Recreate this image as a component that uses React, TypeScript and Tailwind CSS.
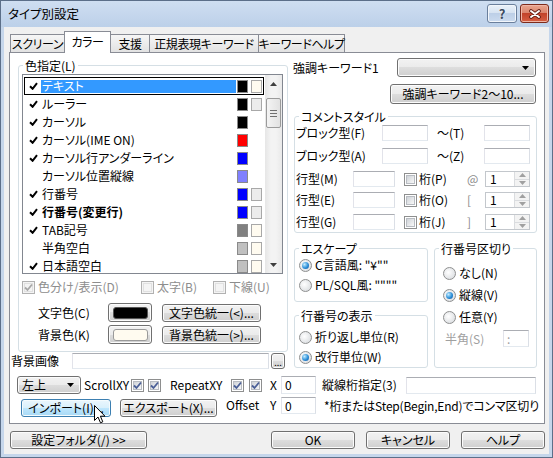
import type { ReactNode } from "react";

const btn =
  "flex items-center justify-center whitespace-nowrap rounded-[3px] border border-[#707070] bg-[linear-gradient(#f2f2f2_0%,#ebebeb_50%,#dddddd_50%,#cfcfcf_100%)] shadow-[inset_0_0_0_1px_#fcfcfc]";
const btnHot =
  "flex items-center justify-center whitespace-nowrap rounded-[3px] border border-[#3c7fb1] bg-[linear-gradient(#eaf6fd_0%,#d9f0fc_50%,#bee6fd_50%,#a7d9f5_100%)] shadow-[inset_0_0_0_1px_#f4fbfe]";
const field =
  "flex items-center border border-[#abadb3] border-l-[#e2e3ea] border-r-[#dbdfe6] border-b-[#e3e9ef] bg-white pl-[3px]";

const items = [
  { label: "テキスト", on: true, fg: "bg-[#000000]", bg: "bg-[#fffbf0]" },
  { label: "ルーラー", on: true, fg: "bg-[#000000]", bg: "bg-[#ececec]" },
  { label: "カーソル", on: true, fg: "bg-[#000000]", bg: "" },
  { label: "カーソル(IME ON)", on: true, fg: "bg-[#ff0000]", bg: "" },
  { label: "カーソル行アンダーライン", on: true, fg: "bg-[#0000ff]", bg: "" },
  { label: "カーソル位置縦線", on: false, fg: "bg-[#8080ff]", bg: "" },
  { label: "行番号", on: true, fg: "bg-[#0000ff]", bg: "bg-[#ececec]" },
  { label: "行番号(変更行)", on: true, fg: "bg-[#0000ff]", bg: "bg-[#ececec]", bold: true },
  { label: "TAB記号", on: true, fg: "bg-[#808080]", bg: "bg-[#fffbf0]" },
  { label: "半角空白", on: false, fg: "bg-[#c0c0c0]", bg: "bg-[#fffbf0]" },
  { label: "日本語空白", on: true, fg: "bg-[#c0c0c0]", bg: "bg-[#fffbf0]" },
];

const tabs = [
  { label: "スクリーン", cls: "w-[55px]" },
  { label: "カラー", cls: "w-[47px]", active: true },
  { label: "支援", cls: "w-[40px]" },
  { label: "正規表現キーワード", cls: "w-[110px]" },
  { label: "キーワードヘルプ", cls: "w-[87px]" },
];

function Tick() {
  return (
    <svg width="9" height="8" viewBox="0 0 9 8">
      <path d="M1 4.2L3.6 6.8L8 1.2" stroke="#000" strokeWidth="2" fill="none" />
    </svg>
  );
}

function Check({ checked = false, disabled = false }: { checked?: boolean; disabled?: boolean }) {
  return (
    <span
      className={`relative flex h-[13px] w-[13px] shrink-0 items-center justify-center border ${
        disabled ? "border-[#b1b1b1] bg-[#f4f4f4]" : "border-[#8e8f8f] bg-white"
      }`}
    >
      <span
        className={`h-[9px] w-[9px] border ${
          disabled
            ? "border-[#e0e0e0] bg-[#f4f4f4]"
            : "border-[#b8bcc2] bg-[linear-gradient(135deg,#cfd3d8,#f8f8f8)]"
        }`}
      />
      {checked && (
        <svg className="absolute inset-0" width="11" height="11" viewBox="0 0 11 11">
          <path
            d="M2 5.5L4.5 8L9 2.5"
            stroke={disabled ? "#a8a8a8" : "#4a5f97"}
            strokeWidth="1.8"
            fill="none"
          />
        </svg>
      )}
    </span>
  );
}

function Radio({ checked = false }: { checked?: boolean }) {
  return (
    <span className="flex h-[13px] w-[13px] shrink-0 items-center justify-center rounded-full border border-[#8e8f8f] bg-[radial-gradient(circle_at_40%_40%,#ffffff,#d3d6da)]">
      {checked && (
        <span className="h-[7px] w-[7px] rounded-full bg-[radial-gradient(circle_at_35%_35%,#c4ecff,#2c8fd8_55%,#0e4e9a)]" />
      )}
    </span>
  );
}

function Arrow({ up = false, color = "#000" }: { up?: boolean; color?: string }) {
  return (
    <svg width="7" height="4" viewBox="0 0 7 4">
      <path d={up ? "M0 4H7L3.5 0Z" : "M0 0H7L3.5 4Z"} fill={color} />
    </svg>
  );
}

function Combo({ className, text }: { className: string; text?: string }) {
  return (
    <div
      className={`flex items-center rounded-[3px] border border-[#707070] bg-[linear-gradient(#f2f2f2_0%,#ebebeb_50%,#dddddd_50%,#cfcfcf_100%)] pl-[4px] pr-[6px] shadow-[inset_0_0_0_1px_#fcfcfc] ${className}`}
    >
      <span className="flex-1">{text}</span>
      <Arrow />
    </div>
  );
}

function Spin() {
  return (
    <span className="flex h-[16px] w-[45px] border border-[#c3c7cc] bg-white">
      <span className="flex flex-1 items-center pl-[4px]">1</span>
      <span className="flex w-[15px] flex-col border-l border-[#dadcdf]">
        <span className="flex flex-1 items-center justify-center border-b border-[#dadcdf] bg-[#f3f3f3]">
          <Arrow up color="#a0a0a0" />
        </span>
        <span className="flex flex-1 items-center justify-center bg-[#f3f3f3]">
          <Arrow color="#a0a0a0" />
        </span>
      </span>
    </span>
  );
}

function Group({ label, className, children }: { label: string; className: string; children?: ReactNode }) {
  return (
    <fieldset className={`flex flex-col rounded-[3px] border border-[#d5dfe5] ${className}`}>
      <legend className="ml-[4px] whitespace-nowrap px-[2px] leading-[13px]">{label}</legend>
      {children}
    </fieldset>
  );
}

function RadioRow({ text, checked, className }: { text: string; checked?: boolean; className: string }) {
  return (
    <div className={`flex h-[14px] items-center ${className}`}>
      <Radio checked={checked} />
      <span className="ml-[3px] whitespace-nowrap">{text}</span>
    </div>
  );
}

function LineRow({ label, digit, sym }: { label: string; digit: string; sym: string }) {
  return (
    <div className="flex h-[16px] items-center">
      <span className="ml-[1px] w-[57px]">{label}</span>
      <span className={`${field} h-[16px] w-[42px]`} />
      <span className="ml-[9px]">
        <Check />
      </span>
      <span className="ml-[2px] w-[47px]">{digit}</span>
      <span className="w-[19px] pl-[1px] text-[#8a8a8a]">{sym}</span>
      <Spin />
    </div>
  );
}

function ColorList() {
  return (
    <div className="ml-[3px] mt-[2px] flex h-[200px] w-[261px] border border-[#828790] bg-white">
      <div className="flex w-[242px] flex-col overflow-hidden pt-[2px]">
        {items.map((it, i) => (
          <div
            key={i}
            className={`mx-[1px] flex h-[18px] shrink-0 items-center border ${
              i === 0 ? "border-black" : "border-transparent"
            }`}
          >
            <span className="flex w-[16px] justify-center">{it.on && <Tick />}</span>
            <span
              className={`flex h-[13px] w-[195px] items-center whitespace-nowrap pl-[1px] ${
                i === 0 ? "bg-[#3399ff] text-white" : ""
              } ${it.bold ? "font-bold" : ""}`}
            >
              {it.label}
            </span>
            <span className={`ml-[1px] h-[13px] w-[11px] border border-[#8a8a8a] ${it.fg}`} />
            {it.bg && <span className={`ml-[3px] h-[13px] w-[11px] border border-[#a8a8a8] ${it.bg}`} />}
          </div>
        ))}
      </div>
      <div className="flex w-[17px] flex-col bg-[linear-gradient(90deg,#e6e6e6,#f3f3f3_35%,#f3f3f3_65%,#e9e9e9)]">
        <span className="flex h-[17px] items-center justify-center">
          <Arrow up color="#404040" />
        </span>
        <span className="mx-[1px] mt-[6px] flex h-[30px] flex-col items-center justify-center gap-[2px] rounded-[2px] border border-[#9b9b9b] bg-[linear-gradient(90deg,#f4f4f4,#e2e2e2)]">
          <span className="h-px w-[7px] bg-[#707070]" />
          <span className="h-px w-[7px] bg-[#707070]" />
          <span className="h-px w-[7px] bg-[#707070]" />
        </span>
        <span className="flex-1" />
        <span className="flex h-[17px] items-center justify-center">
          <Arrow color="#404040" />
        </span>
      </div>
    </div>
  );
}

export default function App() {
  return (
    <div className="relative h-[458px] w-[553px] overflow-hidden border border-[#5c6f89] bg-[#c5d6eb] font-['Noto_Sans_CJK_JP','Noto_Sans',sans-serif] text-[12px] leading-[14px] text-black [font-feature-settings:'palt']">
      {/* title bar */}
      <div className="flex h-[26px] items-start bg-[linear-gradient(#cfdef1,#bcd0e9)] pl-[7px]">
        <span className="mt-[6px] text-[12.5px]">タイプ別設定</span>
        <div className="ml-auto mr-[3px] mt-[3px] flex gap-[3px]">
          <div className="flex h-[19px] w-[30px] items-center justify-center rounded-[3px] border border-[#6a7f9c] bg-[linear-gradient(#eaf1f9_0%,#d5e2f1_50%,#bdcfe7_50%,#cbdbef_100%)] shadow-[inset_0_0_0_1px_#f2f6fb]">
            <span className="text-[13px] font-bold leading-[14px] text-[#3c4b60] [text-shadow:0_0_2px_#fff]">?</span>
          </div>
          <div className="flex h-[19px] w-[29px] items-center justify-center rounded-[3px] border border-[#7d2a1b] bg-[linear-gradient(#e9a58f_0%,#d9826a_50%,#c2432a_50%,#d65f43_100%)] shadow-[inset_0_0_0_1px_#efb6a6]">
            <svg width="12" height="10" viewBox="0 0 12 10">
              <path d="M2 2L10 8M10 2L2 8" stroke="#5a1a10" strokeWidth="3.6" strokeLinecap="round" />
              <path d="M2 2L10 8M10 2L2 8" stroke="#fff" strokeWidth="2" strokeLinecap="round" />
            </svg>
          </div>
        </div>
      </div>

      {/* client */}
      <div className="mx-[3px] flex h-[427px] flex-col bg-[#f0f0f0]">
        <div className="mt-[4px] flex h-[21px] items-end pl-[6px]">
          {tabs.map((t, i) =>
            t.active ? (
              <div
                key={i}
                className={`relative z-10 -mb-px -ml-px flex h-[22px] items-center justify-center whitespace-nowrap border border-b-0 border-[#898c95] bg-white pb-[2px] tracking-[-0.4px] ${t.cls}`}
              >
                {t.label}
              </div>
            ) : (
              <div
                key={i}
                className={`flex h-[18px] items-center justify-center whitespace-nowrap border border-b-0 border-[#898c95] bg-[linear-gradient(#f6f6f6,#e2e2e2)] pt-[1px] tracking-[-0.4px] ${
                  i === 0 ? "" : "-ml-px"
                } ${t.cls}`}
              >
                {t.label}
              </div>
            )
          )}
        </div>

        <div className="ml-[5px] flex h-[372px] w-[536px] flex-col border border-[#898c95] bg-white">
          <div className="flex items-start">
            {/* left column */}
            <div className="ml-[1px] flex w-[277px] flex-col">
              <Group label="色指定(L)" className="ml-[7px] mt-[6px] h-[293px] w-[270px]">
                <ColorList />
                <div className="ml-[3px] mt-[6px] flex h-[14px] items-center text-[#8d8d8d]">
                  <span className="flex w-[119px] items-center">
                    <Check checked disabled />
                    <span className="ml-[3px]">色分け/表示(D)</span>
                  </span>
                  <span className="flex w-[72px] items-center">
                    <Check disabled />
                    <span className="ml-[3px]">太字(B)</span>
                  </span>
                  <span className="flex items-center">
                    <Check disabled />
                    <span className="ml-[3px]">下線(U)</span>
                  </span>
                </div>
                <div className="mt-[9px] flex h-[19px] items-center">
                  <span className="ml-[19px] w-[70px]">文字色(C)</span>
                  <span className={`${btn} h-[19px] w-[44px]`}>
                    <span className="h-[12px] w-[35px] rounded-[3px] border border-[#555] bg-black" />
                  </span>
                  <span className={`${btn} ml-[10px] h-[18px] w-[99px]`}>文字色統一(&lt;)...</span>
                </div>
                <div className="mt-[3px] flex h-[19px] items-center">
                  <span className="ml-[19px] w-[70px]">背景色(K)</span>
                  <span className={`${btn} h-[19px] w-[44px]`}>
                    <span className="h-[12px] w-[35px] rounded-[3px] border border-[#9a9a9a] bg-[#fffbf0]" />
                  </span>
                  <span className={`${btn} ml-[10px] h-[18px] w-[99px]`}>背景色統一(&gt;)...</span>
                </div>
              </Group>
              <div className="mt-[1px] flex h-[16px] items-center">
                <span className="w-[61px]">背景画像</span>
                <span className={`${field} h-[16px] w-[197px]`} />
                <span className={`${btn} ml-[2px] h-[16px] w-[14px] items-end pb-[1px] text-[9px] leading-[9px]`}>...</span>
              </div>
            </div>

            {/* right column */}
            <div className="ml-[5px] flex w-[244px] flex-col">
              <div className="mt-[5px] flex h-[19px] items-center">
                <span className="flex-1">強調キーワード1</span>
                <Combo className="mr-[1px] h-[19px] w-[139px]" />
              </div>
              <span className={`${btn} mr-[1px] mt-[7px] h-[20px] w-[146px] self-end`}>強調キーワード2～10...</span>

              <Group label="コメントスタイル" className="ml-[1px] mt-[6px] h-[123px] w-[243px]">
                <div className="mt-[2px] flex h-[16px] items-center">
                  <span className="ml-[1px] w-[86px]">ブロック型(F)</span>
                  <span className={`${field} h-[16px] w-[46px]`} />
                  <span className="ml-[9px] w-[47px]">～(T)</span>
                  <span className={`${field} h-[16px] w-[46px]`} />
                </div>
                <div className="mt-[7px] flex h-[16px] items-center">
                  <span className="ml-[1px] w-[86px]">ブロック型(A)</span>
                  <span className={`${field} h-[16px] w-[46px]`} />
                  <span className="ml-[9px] w-[47px]">～(Z)</span>
                  <span className={`${field} h-[16px] w-[46px]`} />
                </div>
                <div className="mt-[7px]">
                  <LineRow label="行型(M)" digit="桁(P)" sym="@" />
                </div>
                <div className="mt-[5px]">
                  <LineRow label="行型(E)" digit="桁(O)" sym="[" />
                </div>
                <div className="mt-[6px]">
                  <LineRow label="行型(G)" digit="桁(J)" sym="]" />
                </div>
              </Group>

              <div className="ml-[1px] mt-[9px] flex">
                <div className="flex w-[134px] flex-col">
                  <Group label="エスケープ" className="h-[60px] w-[134px]">
                    <RadioRow className="ml-[4px] mt-[3px]" text={'C言語風: "¥""'} checked />
                    <RadioRow className="ml-[4px] mt-[6px]" text={'PL/SQL風: """"'} />
                  </Group>
                  <Group label="行番号の表示" className="mt-[7px] h-[59px] w-[134px]">
                    <RadioRow className="ml-[4px] mt-[8px]" text="折り返し単位(R)" />
                    <RadioRow className="ml-[4px] mt-[6px]" text="改行単位(W)" checked />
                  </Group>
                </div>
                <Group label="行番号区切り" className="ml-[6px] h-[126px] w-[103px]">
                  <RadioRow className="ml-[8px] mt-[11px]" text="なし(N)" />
                  <RadioRow className="ml-[8px] mt-[8px]" text="縦線(V)" checked />
                  <RadioRow className="ml-[8px] mt-[8px]" text="任意(Y)" />
                  <div className="mt-[6px] flex h-[17px] items-center">
                    <span className="ml-[10px] w-[58px] text-[#a0a0a0]">半角(S)</span>
                    <span className={`${field} h-[17px] w-[26px] text-[#a0a0a0]`}>:</span>
                  </div>
                </Group>
              </div>
            </div>
          </div>

          {/* row A */}
          <div className="mt-[7px] flex h-[18px] items-center">
            <Combo className="ml-[7px] h-[18px] w-[64px]" text="左上" />
            <span className="ml-[3px] w-[47px]">ScrollXY</span>
            <Check checked />
            <span className="ml-[4px]">
              <Check checked />
            </span>
            <span className="ml-[9px] w-[61px]">RepeatXY</span>
            <Check checked />
            <span className="ml-[5px]">
              <Check checked />
            </span>
            <span className="ml-[8px] w-[11px]">X</span>
            <span className={`${field} h-[18px] w-[35px]`}>0</span>
            <span className="ml-[6px] w-[84px]">縦線桁指定(3)</span>
            <span className={`${field} h-[17px] w-[130px]`} />
          </div>

          {/* row B */}
          <div className="mt-[3px] flex h-[20px] items-start">
            <span className={`${btnHot} ml-[11px] mt-[2px] h-[18px] w-[90px]`}>インポート(I)...</span>
            <span className={`${btn} ml-[9px] mt-[2px] h-[18px] w-[97px]`}>エクスポート(X)...</span>
            <span className="ml-[9px] mt-[1px] w-[44px]">Offset</span>
            <span className="mt-[1px] w-[11px]">Y</span>
            <span className={`${field} h-[17px] w-[35px]`}>0</span>
            <span className="ml-[8px] mt-[2px] whitespace-nowrap tracking-[-0.2px]">*桁またはStep(Begin,End)でコンマ区切り</span>
          </div>
        </div>

        {/* dialog buttons */}
        <div className="mt-[7px] flex h-[18px]">
          <span className={`${btn} ml-[6px] w-[137px]`}>設定フォルダ(/) &gt;&gt;</span>
          <span className={`${btn} ml-auto w-[84px] border-[#3c7fb1] shadow-[inset_0_0_0_1px_#9fdcf9]`}>OK</span>
          <span className={`${btn} ml-[11px] w-[84px]`}>キャンセル</span>
          <span className={`${btn} ml-[11px] mr-[4px] w-[84px]`}>ヘルプ</span>
        </div>
      </div>

      {/* mouse pointer over the import button */}
      <svg className="absolute left-[93px] top-[404px]" width="12" height="19" viewBox="0 0 12 19">
        <path d="M0.5 0.5V15.5L4 12L6.5 17.8L8.8 16.8L6.4 11.2H11Z" fill="#fff" stroke="#000" strokeWidth="1" />
      </svg>
    </div>
  );
}
